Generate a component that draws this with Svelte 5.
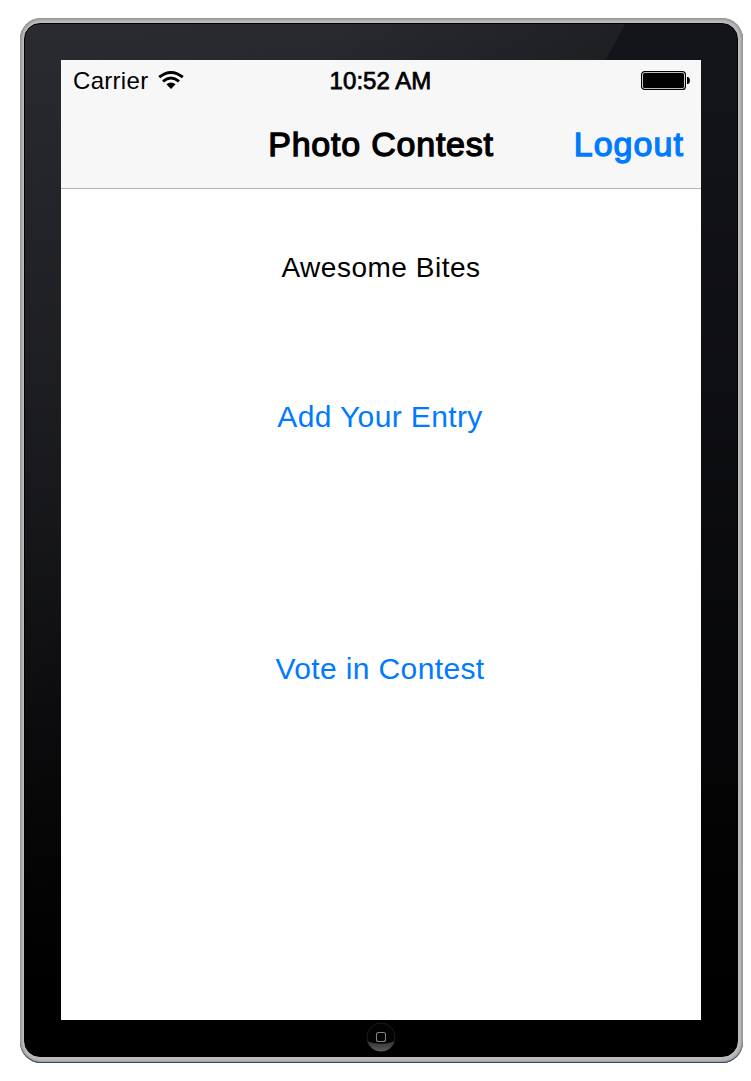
<script>
  const actions = [
    { label: 'Add Your Entry', kind: 'entry' },
    { label: 'Vote in Contest', kind: 'vote' },
  ];
</script>

<div class="page">
  <div class="device">
    <div class="bezel">
      <div class="screen">
        <header>
          <div class="status">
            <div class="carrier">
              <span class="carrier-name">Carrier</span>
              <svg class="wifi" width="26" height="20" viewBox="0 0 26 20" aria-label="Wi-Fi">
                <g fill="none" stroke="#000" stroke-width="2.9">
                  <path d="M1.2 7.2Q13 -2.4 24.8 7.2" />
                  <path d="M5 11.3Q13 4.7 21 11.3" />
                </g>
                <path d="M8.4 14.3Q13 10.9 17.6 14.3L13 18.9Z" />
              </svg>
            </div>
            <span class="time">10:52 AM</span>
            <svg class="battery" width="50" height="19" viewBox="0 0 50 19" aria-label="Battery full">
              <rect x=".6" y=".6" width="43.8" height="17.8" rx="3" fill="#fff" stroke="#000" stroke-width="1.2" />
              <rect x="2" y="2" width="41" height="15" rx="1.5" />
              <path d="M46 6H47Q49 6.5 49 9.5T47 13H46Z" />
            </svg>
          </div>
          <div class="nav">
            <h1>Photo Contest</h1>
            <button class="logout">Logout</button>
          </div>
        </header>
        <main>
          <p class="contest">Awesome Bites</p>
          {#each actions as action}
            <button class="action {action.kind}">{action.label}</button>
          {/each}
        </main>
      </div>
      <svg class="home" width="30" height="30" viewBox="0 0 30 30" aria-label="Home">
        <defs>
          <linearGradient id="shine" x1="0" y1="0" x2="0" y2="1">
            <stop offset="0" stop-color="#333" />
            <stop offset="1" stop-color="#5c5c5c" />
          </linearGradient>
        </defs>
        <circle cx="15" cy="15" r="14" fill="#030303" stroke="#1d1d1d" />
        <path d="M1.2 19.2Q15 24.5 28.8 19.2A14.4 14.4 0 0 1 1.2 19.2Z" fill="url(#shine)" />
        <rect x="10.5" y="10.5" width="9" height="9" rx="2" fill="none" stroke="#858585" stroke-width="1.1" />
      </svg>
    </div>
  </div>
</div>

<style>
  :global(body) { background: #fff; }
  .page {
    box-sizing: border-box;
    width: 751px;
    height: 1081px;
    padding: 18px 8px 18px 20px;
    font-family: "Liberation Sans", Arial, sans-serif;
    color: #000;
  }
  .device {
    box-sizing: border-box;
    width: 723px;
    height: 1045px;
    padding: 5px 5px 6px 4px;
    border-radius: 21px;
    background: #bdbcba;
    box-shadow: inset 0 -1px 0 #31476f, inset 0 0 0 1px #999, inset 0 0 2px 2px #9a9a9a;
  }
  .bezel {
    box-sizing: border-box;
    width: 714px;
    height: 1034px;
    padding: 36px 36px 0;
    border: 1px solid #000;
    border-radius: 16px;
    background:
      linear-gradient(180deg, transparent, rgb(0 0 0 / .32) 37%, rgb(0 0 0 / .55) 56%, rgb(0 0 0 / .85) 79%, #000 92%),
      linear-gradient(118.4deg, #2a2b31 0, #292a30 24%, #1e2024 47.2%, #14151a 47.3%);
    display: flex;
    flex-direction: column;
    align-items: center;
  }
  .screen {
    width: 640px;
    height: 960px;
    flex: none;
    background: #fff;
  }
  header {
    box-sizing: border-box;
    height: 129px;
    background: #f7f7f7;
    border-bottom: 1px solid #b2b2b2;
  }
  .status {
    height: 40px;
    display: grid;
    grid-template-columns: 1fr auto 1fr;
    align-items: center;
    padding: 0 12px;
    font-size: 24px;
  }
  .carrier { display: flex; align-items: center; gap: 10px; }
  .carrier-name { padding-top: 1px; letter-spacing: .3px; }
  .time { padding: 1px 1px 0 0; letter-spacing: .05px; -webkit-text-stroke: .75px #000; }
  .battery { justify-self: end; margin: 1px -2px 0 0; }
  .nav {
    height: 88px;
    display: grid;
    grid-template-columns: 1fr auto 1fr;
    align-items: center;
    padding: 0 17px;
    font-size: 34px;
  }
  h1 {
    grid-column: 2;
    margin: 0;
    font-size: 34px;
    font-weight: 400;
    letter-spacing: .78px;
    -webkit-text-stroke: 1.3px #000;
  }
  button {
    padding: 0;
    border: 0;
    background: none;
    font: inherit;
    color: #007aff;
  }
  .logout {
    justify-self: end;
    letter-spacing: 1.05px;
    -webkit-text-stroke: 1.3px #007aff;
  }
  main { display: flex; flex-direction: column; align-items: center; }
  .contest {
    margin: 62px 0 0;
    font-size: 28px;
    line-height: 34px;
    letter-spacing: .52px;
  }
  .action {
    padding-right: 2px;
    font-size: 30px;
    line-height: 36px;
    letter-spacing: .38px;
  }
  .entry { margin-top: 114px; }
  .vote { margin-top: 216px; }
  .home { flex: none; margin: 2px 1px 0 0; }
</style>
